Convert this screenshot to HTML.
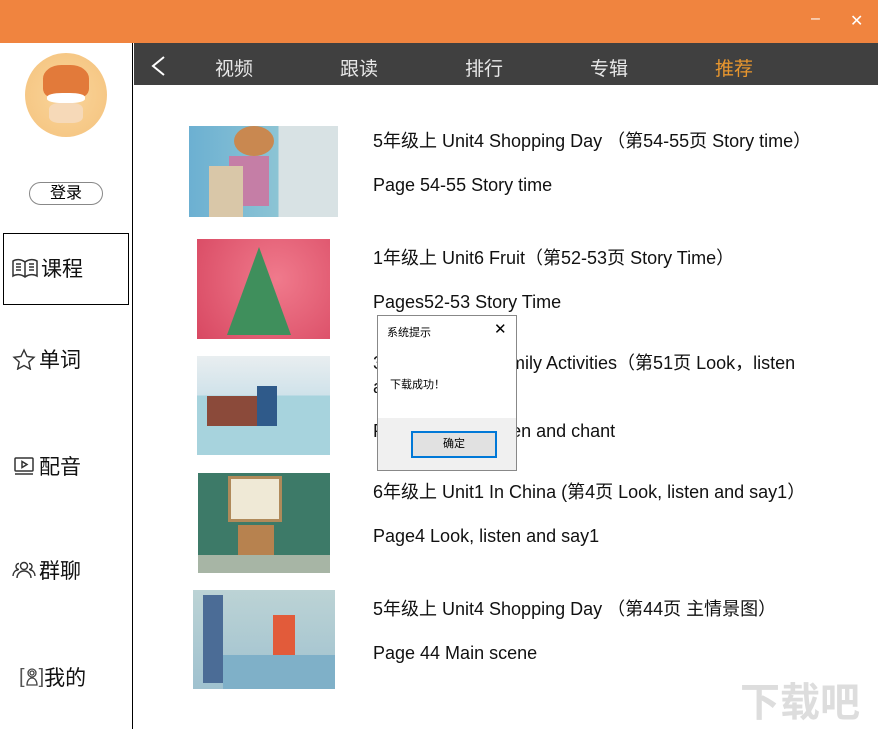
<!DOCTYPE html>
<html><head><meta charset="utf-8"><style>
*{margin:0;padding:0;box-sizing:border-box}
body{width:878px;height:729px;overflow:hidden;background:#fff;font-family:"Liberation Sans","Noto Sans CJK SC",sans-serif;position:relative}
.top{position:absolute;left:0;top:0;width:878px;height:43px;background:#F0843F}
.side{position:absolute;left:0;top:43px;width:133px;height:686px;border-right:1px solid #000}
.nav{position:absolute;left:134px;top:43px;width:744px;height:42px;background:#404040}
.nav span{position:absolute;top:11px;font-size:19px;color:#e8e8e8}
.item{position:absolute;left:12px;font-size:21px;color:#111;display:flex;align-items:center;gap:3px}
.t1{position:absolute;left:373px;font-size:18px;color:#111}
.th{position:absolute}
</style></head><body>
<div class="top"><span style="position:absolute;left:811px;top:10px;color:#fff;font-size:16px">–</span><span style="position:absolute;left:850px;top:11px;color:#fff;font-size:16px">✕</span></div>
<div class="side">
<div style="position:absolute;left:25px;top:10px;width:82px;height:84px;border-radius:50%;background:radial-gradient(circle,#f9d59a,#f5c27d)"><div style="position:absolute;left:18px;top:12px;width:46px;height:34px;background:#e27a3a;border-radius:40% 40% 30% 30%"></div><div style="position:absolute;left:22px;top:40px;width:38px;height:10px;background:#fff;border-radius:40%"></div><div style="position:absolute;left:24px;top:50px;width:34px;height:20px;background:#f6d9b8;border-radius:30%"></div></div>
<div style="position:absolute;left:29px;top:139px;width:74px;height:23px;border:1px solid #888;border-radius:12px;text-align:center;font-size:16px;line-height:21px">登录</div>
<div style="position:absolute;left:3px;top:190px;width:126px;height:72px;border:1px solid #000"></div>
<div class="item" style="top:210px"><svg width="26" height="20" viewBox="0 0 26 20" fill="none" stroke="#333" stroke-width="1.5"><path d="M13 4C9 1 4 1 1 3v15c3-2 8-2 12 1 4-3 9-3 12-1V3c-3-2-8-2-12 1zM13 4v15M4 6h5M4 9h5M4 12h5M17 6h5M17 9h5M17 12h5"/></svg>课程</div>
<div class="item" style="top:301px"><svg width="24" height="22" viewBox="0 0 24 22" fill="none" stroke="#333" stroke-width="1.4"><path d="M12 2l3 6.5 7 .8-5.2 4.8 1.5 7L12 17.5 5.7 21l1.5-7L2 9.3l7-.8z"/></svg>单词</div>
<div class="item" style="top:408px"><svg width="24" height="20" viewBox="0 0 24 20" fill="none" stroke="#333" stroke-width="1.5"><rect x="3" y="2" width="18" height="13" rx="1"/><path d="M10 5.5v6l5-3zM3 18h18"/></svg>配音</div>
<div class="item" style="top:512px"><svg width="24" height="20" viewBox="0 0 24 20" fill="none" stroke="#333" stroke-width="1.4"><circle cx="12" cy="6" r="3.5"/><path d="M5 18c0-4 3-7 7-7s7 3 7 7M7 3.5a3 3 0 1 0 0 6M1 16c0-3 2-6 5-6M17 3.5a3 3 0 1 1 0 6M23 16c0-3-2-6-5-6"/></svg>群聊</div>
<div class="item" style="top:619px;left:19px;gap:0"><span style="font-size:20px;color:#555">[</span><svg width="14" height="20" viewBox="0 0 14 20" fill="none" stroke="#444" stroke-width="1.3"><circle cx="7" cy="6" r="4"/><circle cx="7" cy="6" r="2"/><path d="M2 18c0-4 2-7 5-7s5 3 5 7z"/></svg><span style="font-size:20px;color:#555">]</span>我的</div>
</div>
<div class="nav"><svg style="position:absolute;left:16px;top:12px" width="16" height="22" viewBox="0 0 16 22"><path d="M14 2L3 11l11 9" fill="none" stroke="#fff" stroke-width="2"/></svg>
<span style="left:81px">视频</span><span style="left:206px">跟读</span><span style="left:331px">排行</span><span style="left:456px">专辑</span><span style="left:581px;color:#E8962E">推荐</span></div>

<div class="th" style="left:189px;top:126px;width:149px;height:91px;background:linear-gradient(90deg,#6cb0d2 0,#8cc4d4 60%,#d8e2e4 60%)"><div style="position:absolute;left:45px;top:0;width:40px;height:30px;background:#c98850;border-radius:50%"></div><div style="position:absolute;left:40px;top:30px;width:40px;height:50px;background:#c57ea6"></div><div style="position:absolute;left:20px;top:40px;width:34px;height:51px;background:#d9c7a8"></div></div>
<div class="th" style="left:197px;top:239px;width:133px;height:100px;background:radial-gradient(circle at 60% 40%,#f07a8c,#d84862)"><div style="position:absolute;left:30px;top:8px;width:0;height:0;border-left:32px solid transparent;border-right:32px solid transparent;border-bottom:88px solid #3f8f5c"></div></div>
<div class="th" style="left:197px;top:356px;width:133px;height:99px;background:linear-gradient(#e9eef0 0,#cfe2ea 40%,#a7d3dd 40%)"><div style="position:absolute;left:10px;top:40px;width:50px;height:30px;background:#8b4a3a"></div><div style="position:absolute;left:60px;top:30px;width:20px;height:40px;background:#2f5a8a"></div></div>
<div class="th" style="left:198px;top:473px;width:132px;height:100px;background:#3d7a68"><div style="position:absolute;left:30px;top:3px;width:54px;height:46px;background:#efe9d6;border:3px solid #b08a5a"></div><div style="position:absolute;left:40px;top:52px;width:36px;height:34px;background:#b7824f"></div><div style="position:absolute;left:0;top:82px;width:132px;height:18px;background:#a7b5a5"></div></div>
<div class="th" style="left:193px;top:590px;width:142px;height:99px;background:linear-gradient(#bcd3d5,#9fc1cf)"><div style="position:absolute;left:10px;top:5px;width:20px;height:88px;background:#4b6c96"></div><div style="position:absolute;left:80px;top:25px;width:22px;height:50px;background:#e25b3a"></div><div style="position:absolute;left:30px;top:65px;width:112px;height:34px;background:#7fb0c8"></div></div>

<div class="t1" style="top:127px">5年级上 Unit4 Shopping Day （第54-55页 Story time）</div>
<div class="t1" style="top:175px">Page 54-55 Story time</div>
<div class="t1" style="top:244px">1年级上 Unit6 Fruit（第52-53页 Story Time）</div>
<div class="t1" style="top:292px">Pages52-53 Story Time</div>
<div class="t1" style="top:349px">3年级上 Unit7 Family Activities（第51页 Look，listen</div>
<div class="t1" style="top:373px">and chant）</div>
<div class="t1" style="top:421px">Page51 Look, listen and chant</div>
<div class="t1" style="top:478px">6年级上 Unit1 In China (第4页 Look, listen and say1）</div>
<div class="t1" style="top:526px">Page4 Look, listen and say1</div>
<div class="t1" style="top:595px">5年级上 Unit4 Shopping Day （第44页 主情景图）</div>
<div class="t1" style="top:643px">Page 44 Main scene</div>

<div style="position:absolute;left:377px;top:315px;width:140px;height:156px;background:#fff;border:1px solid #888">
<div style="position:absolute;left:9px;top:8px;font-size:11px">系统提示</div>
<div style="position:absolute;left:116px;top:4px;font-size:15px">✕</div>
<div style="position:absolute;left:12px;top:60px;font-size:11px">下载成功！</div>
<div style="position:absolute;left:0;top:102px;width:138px;height:52px;background:#f0f0f0"></div>
<div style="position:absolute;left:33px;top:115px;width:86px;height:27px;border:2px solid #0078d7;background:#e1e1e1;text-align:center;font-size:11px;line-height:23px">确定</div>
</div>
<div style="position:absolute;left:740px;top:670px;font-size:40px;color:#ddd;font-weight:bold">下载吧</div>
</body></html>
